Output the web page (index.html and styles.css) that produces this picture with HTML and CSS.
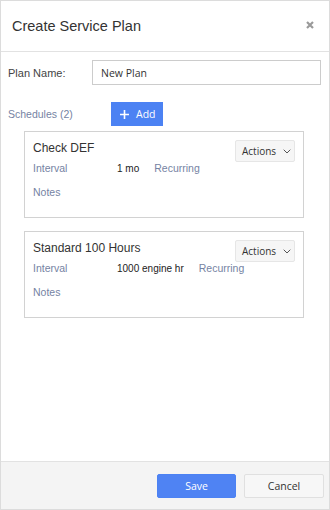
FILE: index.html
```html
<!DOCTYPE html>
<html lang="en">
<head>
    <meta charset="UTF-8">
    <meta name="viewport" content="width=device-width, initial-scale=1.0">
    <title>Create Service Plan</title>
    <link rel="stylesheet" href="styles.css">
</head>
<body>
    <div class="modal">
        <header class="modal-header">
            <h1>Create Service Plan</h1>
            <svg class="close" width="8" height="8" viewBox="0 0 8 8"><path d="M1 1l6 6M7 1l-6 6" stroke="#9a9a9a" stroke-width="2.2"/></svg>
        </header>

        <main class="modal-body">
            <div class="field-row">
                <label for="plan-name">Plan Name:</label>
                <input id="plan-name" type="text" value="New Plan">
            </div>

            <div class="schedules-row">
                <span class="schedules-label">Schedules (2)</span>
                <button class="btn-add">
                    <svg width="9" height="9" viewBox="0 0 9 9"><path d="M4.5 0v9M0 4.5h9" stroke="#fff" stroke-width="1.6"/></svg>
                    Add
                </button>
            </div>

            <div class="schedule">
                <div class="schedule-head">
                    <h2>Check DEF</h2>
                    <button class="btn-actions">Actions
                        <svg width="8" height="5" viewBox="0 0 8 5"><path d="M0.7 0.7l3.3 3.3 3.3-3.3" fill="none" stroke="#555" stroke-width="1"/></svg>
                    </button>
                </div>
                <div class="schedule-line">
                    <span class="key">Interval</span>
                    <span class="value">1 mo</span>
                    <span class="tag">Recurring</span>
                </div>
                <div class="schedule-line">
                    <span class="key">Notes</span>
                </div>
            </div>

            <div class="schedule">
                <div class="schedule-head">
                    <h2>Standard 100 Hours</h2>
                    <button class="btn-actions">Actions
                        <svg width="8" height="5" viewBox="0 0 8 5"><path d="M0.7 0.7l3.3 3.3 3.3-3.3" fill="none" stroke="#555" stroke-width="1"/></svg>
                    </button>
                </div>
                <div class="schedule-line">
                    <span class="key">Interval</span>
                    <span class="value">1000 engine hr</span>
                    <span class="tag">Recurring</span>
                </div>
                <div class="schedule-line">
                    <span class="key">Notes</span>
                </div>
            </div>
        </main>

        <footer class="modal-footer">
            <button class="btn-save">Save</button>
            <button class="btn-cancel">Cancel</button>
        </footer>
    </div>
</body>
</html>
```

FILE: styles.css
```css
body {
    margin: 0;
    font-family: "Liberation Sans", Arial, sans-serif;
    color: #333;
}

.modal {
    width: 330px;
    height: 510px;
    box-sizing: border-box;
    border: 1px solid #dcdcdc;
    display: flex;
    flex-direction: column;
    background: #fff;
}

.modal-header {
    height: 50px;
    border-bottom: 1px solid #e2e2e2;
    display: flex;
    align-items: center;
    justify-content: space-between;
    padding: 0 15px 0 11px;
}

.modal-header h1 {
    margin: 0;
    font-size: 14.5px;
    font-weight: normal;
    color: #333;
}

.close {
    margin-top: -2px;
}

.modal-body {
    flex: 1;
    padding: 8px 7px;
}

.field-row {
    display: flex;
    align-items: center;
}

.field-row label {
    width: 84px;
    font-size: 11px;
    color: #444;
}

.field-row input {
    width: 229px;
    height: 25px;
    box-sizing: border-box;
    border: 1px solid #ccc;
    padding: 0 8px;
    font-family: "Open Sans", sans-serif;
    font-size: 10.5px;
    color: #333;
}

.schedules-row {
    display: flex;
    align-items: center;
    margin-top: 17px;
}

.schedules-label {
    width: 103px;
    font-size: 10.5px;
    color: #7583a3;
}

.btn-add {
    display: flex;
    align-items: center;
    gap: 7px;
    width: 52px;
    height: 24px;
    padding: 0 0 0 9px;
    border: none;
    background: #4c82f3;
    color: #fff;
    font-family: "Open Sans", sans-serif;
    font-size: 10.5px;
}

.schedule {
    margin: 5px 0 13px 16px;
    width: 280px;
    height: 87px;
    box-sizing: border-box;
    border: 1px solid #d2d2d2;
    padding: 9px 8px 0 8px;
}

.schedule-head {
    display: flex;
    justify-content: space-between;
    align-items: flex-start;
}

.schedule-head h2 {
    margin: 0;
    font-size: 12px;
    font-weight: normal;
    color: #333;
}

.btn-actions {
    display: flex;
    align-items: center;
    gap: 7px;
    width: 60px;
    height: 22px;
    margin-top: -1px;
    padding: 0 0 0 6px;
    border: 1px solid #e6e6e6;
    border-radius: 2px;
    background: #f6f6f6;
    font-family: "Open Sans", sans-serif;
    font-size: 10px;
    color: #333;
}

.schedule-line {
    display: flex;
    align-items: baseline;
    font-size: 10.5px;
    height: 24px;
}

.key {
    width: 84px;
    color: #7583a3;
}

.value {
    color: #222;
    font-size: 10px;
    margin-right: 15px;
}

.tag {
    color: #7583a3;
}

.modal-footer {
    height: 47px;
    border-top: 1px solid #e2e2e2;
    background: #f4f4f4;
    display: flex;
    align-items: center;
    justify-content: flex-end;
    gap: 8px;
    padding-right: 5px;
}

.modal-footer button {
    height: 24px;
    font-family: "Open Sans", sans-serif;
    font-size: 10.5px;
    border-radius: 2px;
}

.btn-save {
    width: 79px;
    border: 1px solid #4c82f3;
    background: #4f83f3;
    color: #fff;
}

.btn-cancel {
    width: 80px;
    border: 1px solid #e0e0e0;
    background: #f7f7f7;
    color: #333;
}
```
